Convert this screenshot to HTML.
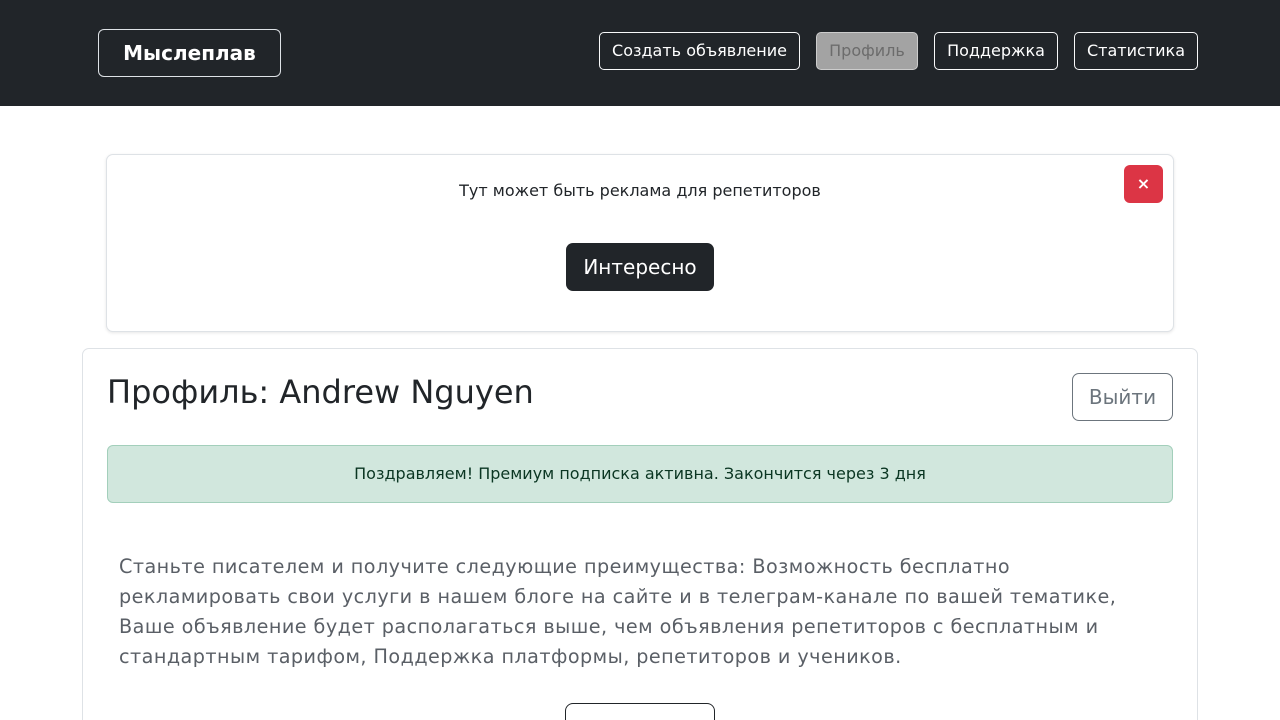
<!DOCTYPE html>
<html><head><meta charset="utf-8"><style>
*{box-sizing:border-box;margin:0;padding:0}
html{overflow:hidden}
body{width:1280px;height:720px;overflow:hidden;background:#fff;font-family:"DejaVu Sans","Liberation Sans",sans-serif;color:#212529;position:relative}
.nav{position:absolute;left:0;top:0;width:1280px;height:106px;background:#212529}
.brand{position:absolute;left:98px;top:29px;width:183px;height:48px;border:1px solid #dee2e6;border-radius:6px;color:#fff;font-weight:bold;font-size:20px;line-height:46px;text-align:center}
.nb{position:absolute;top:32px;height:38px;border:1px solid #f8f9fa;border-radius:5px;color:#fff;font-size:16px;line-height:36px;text-align:center}
.card{position:absolute;border:1px solid #dee2e6;border-radius:7px;background:#fff}
</style></head><body>
<div class="nav">
<div class="brand">Мыслеплав</div>
<div class="nb" style="left:599px;width:201px">Создать объявление</div>
<div class="nb" style="left:816px;width:102px;background:#a3a3a3;color:#6c6c6c;border-color:#ccc">Профиль</div>
<div class="nb" style="left:934px;width:124px">Поддержка</div>
<div class="nb" style="left:1074px;width:124px">Статистика</div>
</div>
<div class="card" style="left:106px;top:154px;width:1068px;height:178px;box-shadow:0 1px 3px rgba(0,0,0,.1)">
<div style="position:absolute;left:0;width:100%;top:26px;text-align:center;font-size:16px">Тут может быть реклама для репетиторов</div>
<div style="position:absolute;left:1017px;top:10px;width:39px;height:38px;background:#dc3545;border-radius:6px;color:#fff;text-align:center;line-height:37px;font-size:16px;font-weight:bold">×</div>
<div style="position:absolute;left:459px;top:88px;width:148px;height:48px;background:#212529;border-radius:7px;color:#fff;font-size:20px;line-height:48px;text-align:center">Интересно</div>
</div>
<div class="card" style="left:82px;top:348px;width:1116px;height:400px">
<div style="position:absolute;left:24px;top:24px;font-size:32px">Профиль: Andrew Nguyen</div>
<div style="position:absolute;left:989px;top:24px;width:101px;height:48px;border:1px solid #6c757d;border-radius:7px;color:#6c757d;font-size:20px;line-height:46px;text-align:center">Выйти</div>
<div style="position:absolute;left:24px;top:96px;width:1066px;height:58px;background:#d1e7dd;border:1px solid #a3cfbb;border-radius:6px;color:#0a3622;font-size:16px;line-height:56px;text-align:center">Поздравляем! Премиум подписка активна. Закончится через 3 дня</div>
<div style="position:absolute;left:36px;top:203px;width:1040px;font-size:19.2px;line-height:30px;color:#5a5f66;letter-spacing:.45px">Станьте писателем и получите следующие преимущества: Возможность бесплатно рекламировать свои услуги в нашем блоге на сайте и в телеграм-канале по вашей тематике, Ваше объявление будет располагаться выше, чем объявления репетиторов с бесплатным и стандартным тарифом, Поддержка платформы, репетиторов и учеников.</div>
<div style="position:absolute;left:482px;top:354px;width:150px;height:48px;border:1px solid #212529;border-radius:8px"></div>
</div>
</body></html>
